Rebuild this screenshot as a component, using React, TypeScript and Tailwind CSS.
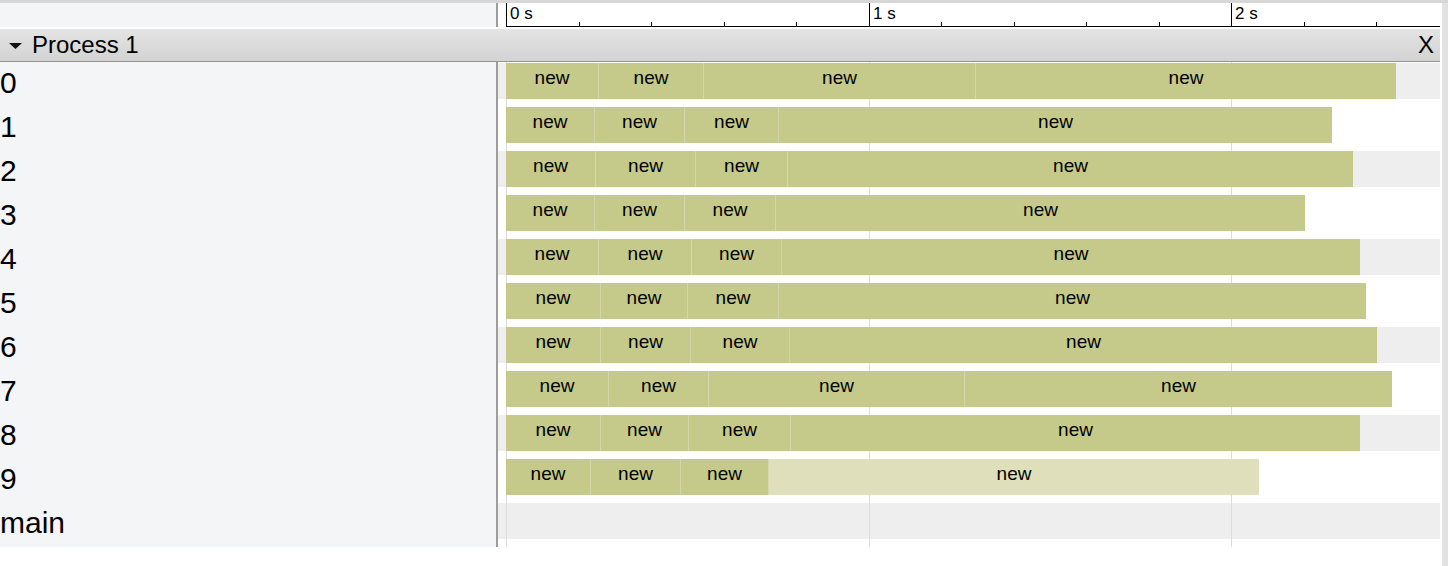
import React from "react";

const rows: number[][] = [
  [506, 598, 703, 975, 1396],
  [506, 594, 684, 778, 1332],
  [506, 595, 695, 787, 1353],
  [506, 594, 684, 775, 1305],
  [506, 598, 691, 781, 1360],
  [506, 600, 687, 778, 1366],
  [506, 600, 690, 789, 1377],
  [506, 608, 708, 964, 1392],
  [506, 600, 688, 790, 1360],
  [506, 590, 680, 768, 1259],
];

const labels = ["0", "1", "2", "3", "4", "5", "6", "7", "8", "9", "main"];

const minorTicks = [1, 2, 3, 4, 6, 7, 8, 9, 11, 12].map((k) => Math.round(8 + k * 72.5));
const majorTicks = [
  { x: 8, label: "0 s" },
  { x: 371, label: "1 s" },
  { x: 733, label: "2 s" },
];

function Segments({ bounds, lastLight }: { bounds: number[]; lastLight: boolean }) {
  const segs = [];
  for (let i = 0; i < bounds.length - 1; i++) {
    const w = bounds[i + 1] - bounds[i];
    const light = lastLight && i === bounds.length - 2;
    segs.push(
      <div
        key={i}
        style={{ width: w }}
        className={
          "relative z-10 h-full shrink-0 flex justify-center pt-[5px] text-[19px] leading-none " +
          (light ? "bg-[#dfe0bb] " : "bg-[#c5ca8b] ") +
          (i > 0 ? "border-l border-[#d3d7a9]" : "")
        }
      >
        new
      </div>
    );
  }
  return <div className="flex h-full pl-[8px]">{segs}</div>;
}

export default function App() {
  return (
    <div className="w-[1448px] h-[566px] bg-white overflow-hidden font-['Liberation_Sans',Arial,sans-serif] text-black">
      <div className="h-[3px] bg-[#d7d7d7]" />
      <div className="flex h-[563px]">
        <div className="w-[1440px] flex flex-col">
          {/* ruler */}
          <div className="flex h-[24px]">
            <div className="w-[496px] bg-[#f4f5f7]" />
            <div className="w-[2px] bg-[#9d9d9d]" />
            <div className="relative flex-1 bg-white">
              <div className="absolute left-[8px] right-0 bottom-0 h-px bg-black" />
              {majorTicks.map((t) => (
                <React.Fragment key={t.x}>
                  <div className="absolute top-0 bottom-0 w-px bg-black" style={{ left: t.x }} />
                  <div
                    className="absolute top-[2px] text-[17px] leading-none"
                    style={{ left: t.x + 4 }}
                  >
                    {t.label}
                  </div>
                </React.Fragment>
              ))}
              {minorTicks.map((x) => (
                <div key={x} className="absolute bottom-0 h-[5px] w-px bg-black" style={{ left: x }} />
              ))}
            </div>
          </div>
          <div className="h-[2px]" />
          {/* header */}
          <div className="h-[33px] flex items-center bg-gradient-to-b from-[#e4e4e4] to-[#d3d3d3] border-b border-[#939393]">
            <svg width="13" height="6" viewBox="0 0 13 6" className="ml-[9px] mt-[1px]">
              <polygon points="0,0 13,0 6.5,6" fill="#111" />
            </svg>
            <span className="ml-[10px] text-[24px] leading-none">Process 1</span>
            <span className="ml-auto mr-[6px] text-[24px] leading-none">X</span>
          </div>
          {/* body */}
          <div className="flex h-[485px]">
            <div className="w-[496px] bg-[#f4f5f7] pt-[1px]">
              {labels.map((l) => (
                <div key={l} className="h-[36px] mb-[8px] pt-[5px] text-[30px] leading-none">
                  {l}
                </div>
              ))}
            </div>
            <div className="w-[2px] bg-[#9d9d9d]" />
            <div className="relative flex-1 pt-[1px]">
              {[8, 371, 733].map((x) => (
                <div key={x} className="absolute top-0 bottom-0 w-px bg-[#dcdcdc]" style={{ left: x }} />
              ))}
              {labels.map((l, i) => (
                <div key={l} className={"h-[36px] mb-[8px] " + (i % 2 === 0 ? "bg-[#eeeeee]" : "bg-white")}>
                  {i < rows.length ? <Segments bounds={rows[i]} lastLight={i === 9} /> : null}
                </div>
              ))}
            </div>
          </div>
        </div>
        <div className="w-[2px]" />
        <div className="w-[6px] bg-[#e2e2e2]" />
      </div>
    </div>
  );
}
